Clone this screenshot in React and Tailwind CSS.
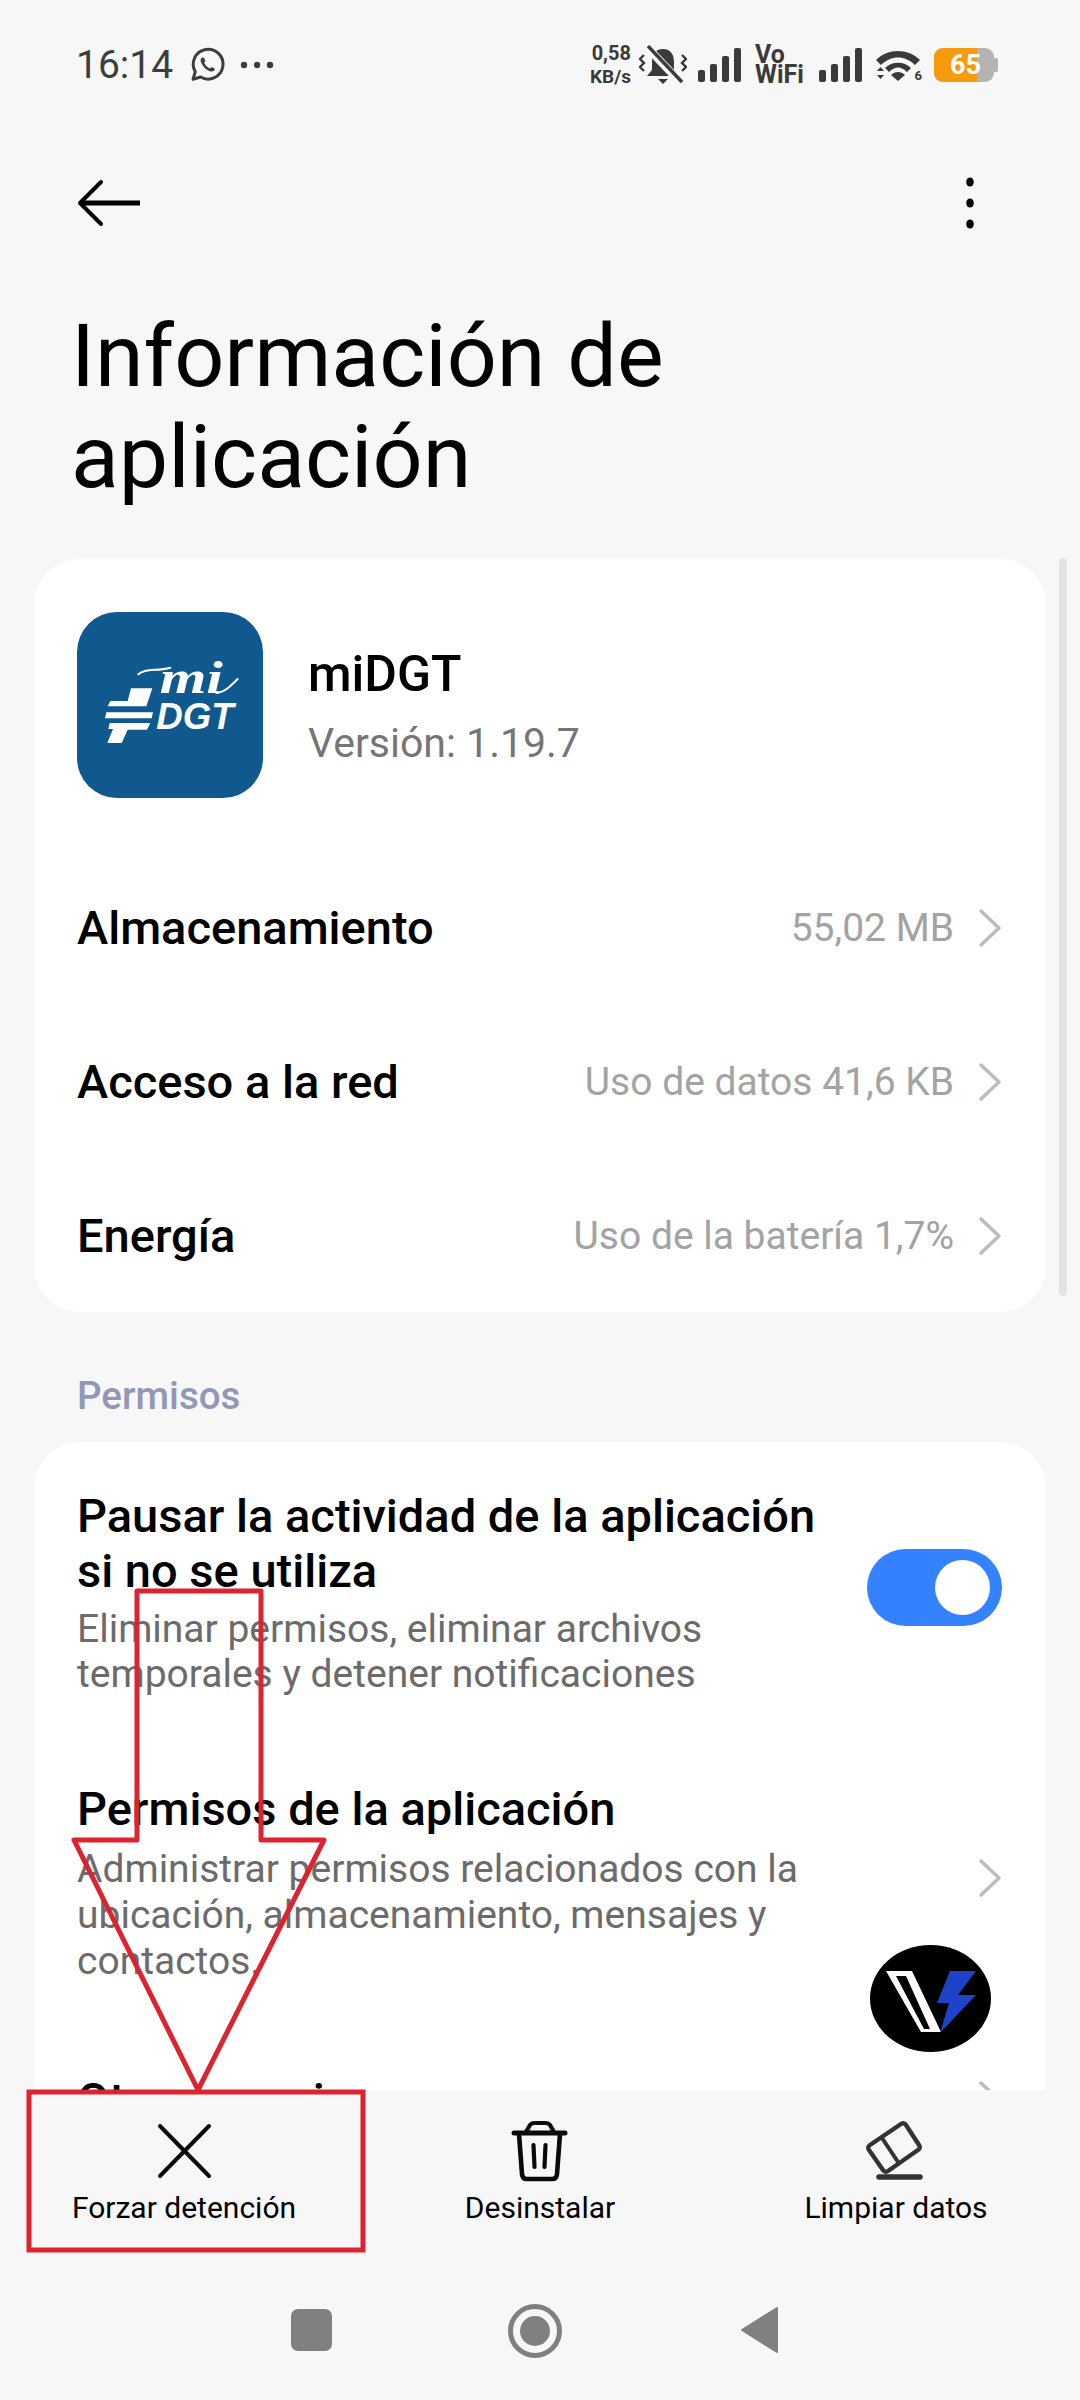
const Chevron = ({ className = "" }) => (
  <svg width="24" height="40" viewBox="0 0 24 40" className={"shrink-0 " + className}>
    <path d="M3 3 L21 20 L3 37" fill="none" stroke="#bcbcbc" strokeWidth="3.5" strokeLinecap="round" strokeLinejoin="round" />
  </svg>
);

const Bars = () => (
  <svg width="44" height="34" viewBox="0 0 44 34" className="shrink-0">
    <rect x="0" y="22" width="7" height="12" rx="2" fill="#3a3a3a" />
    <rect x="12" y="16" width="7" height="18" rx="2" fill="#3a3a3a" />
    <rect x="24" y="8" width="7" height="26" rx="2" fill="#3a3a3a" />
    <rect x="36" y="0" width="7" height="34" rx="2" fill="#3a3a3a" />
  </svg>
);

const Row = ({ label, value }) => (
  <div className="flex items-center justify-between h-[154px]">
    <span className="text-[47px] font-medium text-black">{label}</span>
    <div className="flex items-center gap-[24px]">
      <span className="text-[39px] text-[#a3a3a3]">{value}</span>
      <Chevron />
    </div>
  </div>
);

const AppIcon = () => (
  <svg width="186" height="186" viewBox="112 95 558 558" className="shrink-0">
    <rect x="112" y="95" width="558" height="558" rx="120" fill="#10598f" />
    <g fill="#fff">
      <polygon points="274,324 338,324 320,378 204,378 212,362 264,362" />
      <polygon points="200,396 340,396 336,414 196,414" />
      <polygon points="210,428 332,428 322,448 264,448 246,488 203,488 220,446 206,446" />
      <path d="M296 282 C320 262 350 274 392 262" fill="none" stroke="#fff" strokeWidth="6" strokeLinecap="round" />
      <path d="M530 338 C555 336 575 315 594 296" fill="none" stroke="#fff" strokeWidth="6" strokeLinecap="round" />
    </g>
    <text x="350" y="445" fill="#fff" fontFamily="Liberation Sans, sans-serif" fontWeight="700" fontStyle="italic" fontSize="110" textLength="232" lengthAdjust="spacingAndGlyphs">DGT</text>
    <text x="360" y="338" fill="#fff" fontFamily="Liberation Serif, serif" fontStyle="italic" fontWeight="700" fontSize="140" textLength="190" lengthAdjust="spacingAndGlyphs">mi</text>
  </svg>
);

export default function App() {
  return (
    <div className="relative w-[1080px] h-[2400px] overflow-hidden bg-[#f7f7f7] flex flex-col font-['Roboto',sans-serif]">
      {/* status bar */}
      <div className="h-[173px] shrink-0 flex items-start justify-between pl-[76px] pr-[82px] pt-[43px]">
        <div className="flex items-center h-[44px]">
          <span className="text-[39px] leading-none text-[#3d3d3d]">16:14</span>
          <svg width="38" height="38" viewBox="0 0 24 24" className="ml-[15px]" fill="none" stroke="#3d3d3d" strokeWidth="1.9">
            <path d="M3.2 21 L4.6 16.2 A9.4 9.4 0 1 1 8 19.6 Z" strokeLinejoin="round" />
            <path d="M9 7.2 C8 7.6 7.6 9 8.4 10.8 C9.6 13.4 11.6 15.2 13.8 16 C15.6 16.6 17 15.6 17 14.4 L15 13.2 L13.9 14.2 C12.4 13.6 10.9 12.2 10.2 10.6 L11 9.4 L10 7.2 Z" fill="#3d3d3d" stroke="none" />
          </svg>
          <svg width="34" height="8" viewBox="0 0 34 8" className="ml-[14px]">
            <circle cx="4" cy="4" r="3.2" fill="#3d3d3d" />
            <circle cx="17" cy="4" r="3.2" fill="#3d3d3d" />
            <circle cx="30" cy="4" r="3.2" fill="#3d3d3d" />
          </svg>
        </div>
        <div className="flex items-center h-[44px]">
          <div className="flex flex-col items-end text-[#3a3a3a] font-bold text-[20px] leading-[23px] w-[46px]">
            <span>0,58</span>
            <span className="text-[19px]">KB/s</span>
          </div>
          <svg width="48" height="40" viewBox="0 0 48 40" className="ml-[8px] shrink-0">
            <path d="M24 4 C16 4 13 10 13 17 L13 25 L8 31 L40 31 L35 25 L35 17 C35 10 32 4 24 4 Z" fill="#3a3a3a" />
            <path d="M19 34 H29 L24 39 Z" fill="#3a3a3a" />
            <path d="M7 1 L42 38" stroke="#f7f7f7" strokeWidth="8" />
            <path d="M9 1 L43 37" stroke="#3a3a3a" strokeWidth="3.4" />
            <path d="M5 10 L1 14 L5 18 L1 22 L5 26" fill="none" stroke="#3a3a3a" strokeWidth="2.4" />
            <path d="M43 10 L47 14 L43 18 L47 22 L43 26" fill="none" stroke="#3a3a3a" strokeWidth="2.4" />
          </svg>
          <div className="ml-[11px]"><Bars /></div>
          <div className="ml-[13px] flex flex-col text-[#3a3a3a] font-bold text-[25px] leading-[20px] w-[52px]">
            <span>Vo</span>
            <span>WiFi</span>
          </div>
          <div className="ml-[12px]"><Bars /></div>
          <div className="ml-[11px] relative w-[48px] h-[36px] shrink-0">
            <svg width="48" height="36" viewBox="0 0 48 36">
              <path d="M2 13 C14 1 34 1 46 13 L41 18 C31 8 17 8 7 18 Z" fill="#3a3a3a" />
              <path d="M11 21 C18 14 30 14 37 21 L33 25 C27 19 21 19 15 25 Z" fill="#3a3a3a" />
              <path d="M17 28 C21 24 27 24 31 28 L24 34 Z" fill="#3a3a3a" />
              <path d="M3 24 L6.5 20 L10 24 Z M3 28 L10 28 L6.5 32 Z" fill="#3a3a3a" />
            </svg>
            <span className="absolute right-0 bottom-0 text-[13px] leading-[15px] font-bold text-[#3a3a3a]">6</span>
          </div>
          <div className="ml-[12px] flex items-center shrink-0">
            <div className="relative w-[60px] h-[34px] rounded-[9px] overflow-hidden bg-[#b3b3b3]">
              <div className="absolute inset-y-0 left-0 w-[43px] bg-[#f89a0e]" />
              <span className="absolute inset-0 pl-[16px] flex items-center text-white font-bold text-[27px] leading-none">65</span>
            </div>
            <div className="w-[4px] h-[14px] rounded-r-[2px] bg-[#b3b3b3]" />
          </div>
        </div>
      </div>

      {/* header */}
      <div className="h-[60px] shrink-0 flex items-center justify-between pl-[77px] pr-[106px]">
        <svg width="66" height="48" viewBox="0 0 66 48">
          <path d="M24 3 L3 24 L24 45" fill="none" stroke="#000" strokeWidth="4" strokeLinecap="round" strokeLinejoin="round" />
          <path d="M4 24 H63" stroke="#000" strokeWidth="5" />
        </svg>
        <svg width="8" height="52" viewBox="0 0 8 52">
          <ellipse cx="4" cy="5" rx="3.8" ry="4.5" fill="#000" />
          <ellipse cx="4" cy="26" rx="3.8" ry="4.5" fill="#000" />
          <ellipse cx="4" cy="47" rx="3.8" ry="4.5" fill="#000" />
        </svg>
      </div>

      {/* title */}
      <h1 className="shrink-0 pl-[71px] mt-[72px] text-[88px] leading-[101px] font-normal text-black">
        Información de<br />aplicación
      </h1>

      {/* content */}
      <div className="flex-1 min-h-0 overflow-hidden px-[34px] mt-[52px]">
        <div className="bg-white rounded-[46px] pt-[53px] pl-[43px] pr-[44px] h-[753px]">
          <div className="flex items-center h-[186px]">
            <AppIcon />
            <div className="ml-[45px]">
              <div className="text-[50px] leading-[60px] font-medium text-black">miDGT</div>
              <div className="text-[41px] leading-[46px] mt-[16px] text-[#757575]">Versión: 1.19.7</div>
            </div>
          </div>
          <div className="mt-[53px]">
            <Row label="Almacenamiento" value="55,02 MB" />
            <Row label="Acceso a la red" value="Uso de datos 41,6 KB" />
            <Row label="Energía" value="Uso de la batería 1,7%" />
          </div>
        </div>

        <div className="h-[130px] pl-[43px] pt-[38px] flex items-center text-[38.5px] font-medium text-[#9297b8]">Permisos</div>

        <div className="bg-white rounded-t-[46px] pl-[43px] pr-[44px] pt-[46px] h-[800px]">
          <div className="flex items-center justify-between">
            <div className="w-[770px]">
              <div className="text-[47px] leading-[55px] font-medium text-black">Pausar la actividad de la aplicación si no se utiliza</div>
              <div className="text-[39px] leading-[45px] text-[#6b6b6b] mt-[9px]">Eliminar permisos, eliminar archivos temporales y detener notificaciones</div>
            </div>
            <div className="relative w-[135px] h-[77px] rounded-full bg-[#3482ff] -mt-[10px]">
              <div className="absolute right-[12px] top-[11px] w-[55px] h-[55px] rounded-full bg-white" />
            </div>
          </div>
          <div className="flex items-center justify-between mt-[84px]">
            <div className="w-[770px]">
              <div className="text-[47px] leading-[55px] font-medium text-black">Permisos de la aplicación</div>
              <div className="text-[39px] leading-[46px] text-[#6b6b6b] mt-[10px]">Administrar permisos relacionados con la ubicación, almacenamiento, mensajes y contactos.</div>
            </div>
            <Chevron className="-mt-[10px]" />
          </div>
          <div className="flex items-center justify-between mt-[88px]">
            <div className="text-[47px] leading-[55px] font-medium text-black">Otros permisos</div>
            <Chevron />
          </div>
        </div>
      </div>

      {/* bottom actions */}
      <div className="h-[200px] shrink-0 grid grid-cols-3 px-[6px] pt-[28px] bg-[#f7f7f7] relative">
        {[
          {
            label: "Forzar detención",
            icon: (
              <svg width="64" height="64" viewBox="0 0 64 64">
                <path d="M8 8 L57 58 M57 8 L8 58" stroke="#0a0a0a" strokeWidth="4" strokeLinecap="round" />
              </svg>
            ),
          },
          {
            label: "Desinstalar",
            icon: (
              <svg width="64" height="64" viewBox="0 0 64 64" fill="none" stroke="#0a0a0a" strokeLinecap="round" strokeLinejoin="round">
                <path d="M6 15 H57" strokeWidth="5" />
                <path d="M18 14 L22 7 Q23.5 5 26 5 H38 Q40.5 5 42 7 L46 14" strokeWidth="4.2" />
                <path d="M11 16 L14 56 Q14.4 61 19 61 H44 Q48.6 61 49 56 L52 16" strokeWidth="4.6" />
                <path d="M25.5 27 L26.5 49 M37.5 27 L36.5 49" strokeWidth="4.2" />
              </svg>
            ),
          },
          {
            label: "Limpiar datos",
            icon: (
              <svg width="64" height="64" viewBox="0 0 64 64" fill="none" stroke="#333" strokeLinejoin="round">
                <path d="M37 6 Q40 4 42 7 L55 27 Q57 30 54 32 L24 53 Q21 55 19 52 L5 32 Q3 29 6 27 Z" strokeWidth="4.4" />
                <path d="M18 20 L34 44" strokeWidth="4" />
                <path d="M15 59 H56" strokeWidth="5.5" strokeLinecap="round" />
              </svg>
            ),
          },
        ].map((it) => (
          <div key={it.label} className="flex flex-col items-center">
            <div className="h-[64px] flex items-center justify-center">{it.icon}</div>
            <span className="mt-[8px] text-[30px] leading-[36px] text-black">{it.label}</span>
          </div>
        ))}
      </div>

      {/* nav bar */}
      <div className="h-[110px] shrink-0 flex items-start pl-[291px] pt-[16px] bg-[#f7f7f7]">
        <div className="w-[41px] h-[42px] mt-[3px] rounded-[7px] bg-[#808080]" />
        <div className="ml-[176px] w-[54px] h-[54px] -mt-[2px] rounded-full border-[5px] border-[#808080] flex items-center justify-center">
          <div className="w-[30px] h-[30px] rounded-full bg-[#808080]" />
        </div>
        <svg width="40" height="48" viewBox="0 0 40 48" className="ml-[178px]">
          <path d="M37 2 V46 L2 24 Z" fill="#808080" stroke="#808080" strokeWidth="2" strokeLinejoin="round" />
        </svg>
      </div>

      {/* scrollbar */}
      <div className="absolute left-[1059px] top-[558px] w-[8px] h-[738px] rounded-full bg-[#e3e3e3]" />

      {/* floating badge */}
      <svg width="121" height="107" viewBox="0 0 121 107" className="absolute left-[870px] top-[1945px]">
        <ellipse cx="60.5" cy="53.5" rx="60.5" ry="53.5" fill="#000" />
        <path d="M16 26 H42 L71 87 H51 Z M26 31 L54 84 H60 L36 31 Z" fill="#fff" fillRule="evenodd" />
        <path d="M80 26 H106 L88 50 H106 L70 88 L79 58 H67 Z" fill="#1d44c8" />
      </svg>

      {/* annotations */}
      <svg width="1080" height="2400" viewBox="0 0 1080 2400" className="absolute inset-0 pointer-events-none" fill="none" stroke="#db2430">
        <path d="M137 1591 H261 V1840 H324 L198 2090 L74 1840 H137 Z" strokeWidth="5" strokeLinejoin="round" />
        <rect x="29" y="2092" width="334" height="158" strokeWidth="5" />
      </svg>
    </div>
  );
}
